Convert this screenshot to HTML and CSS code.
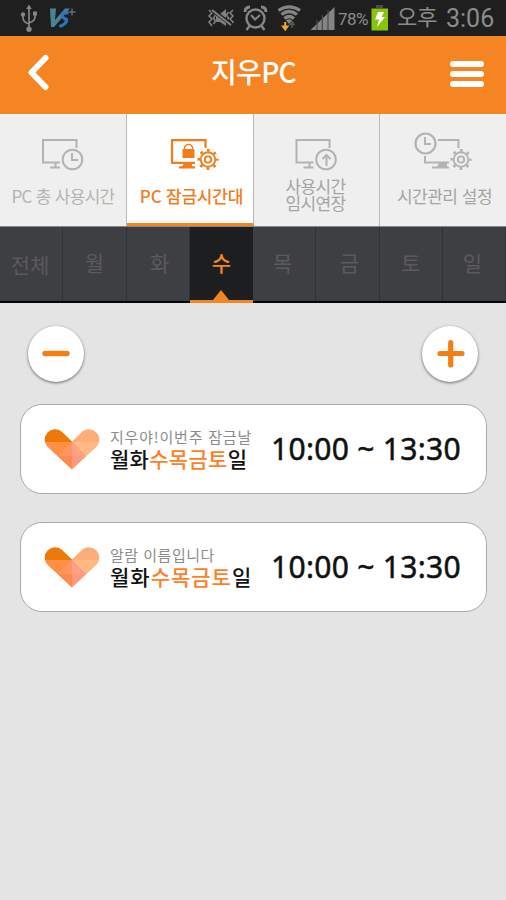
FILE: index.html
```
<!DOCTYPE html>
<html lang="ko">
<head>
    <meta charset="UTF-8">
    <meta name="viewport" content="width=device-width, initial-scale=1.0">
    <title>지우PC</title>
    <link rel="stylesheet" href="styles.css">
</head>
<body>
    <!-- shared shapes -->
    <svg class="defs" width="0" height="0">
        <symbol id="gear" viewBox="-12 -12 24 24">
            <circle r="7.6" fill="none" stroke="currentColor" stroke-width="1.9"/>
            <circle r="3.3" fill="none" stroke="currentColor" stroke-width="2"/>
            <circle r="9.6" fill="none" stroke="currentColor" stroke-width="2.8" stroke-dasharray="2.8 4.74" stroke-dashoffset="1.4"/>
        </symbol>
        <symbol id="heart" viewBox="0 0 56 42">
            <clipPath id="heartClip">
                <path d="M28 41.5L3.2 18.5A10.4 10.4 0 0 1 17.6 3.6L28 13.5L38.4 3.6A10.4 10.4 0 0 1 52.8 18.5Z"/>
            </clipPath>
            <g clip-path="url(#heartClip)">
                <rect width="28" height="14" fill="#ec7a08"/>
                <rect x="28" width="28" height="14" fill="#fdae78"/>
                <rect y="14" width="28" height="28" fill="#ff8f45"/>
                <rect x="28" y="14" width="28" height="28" fill="#ffb985"/>
                <path d="M28 14L14 28L28 42Z" fill="#ff8a4e"/>
                <path d="M28 14L42 28L28 42Z" fill="#ff9a80"/>
                <path d="M28 14L14 28H28Z" fill="#ff9662"/>
                <path d="M28 14L42 28H28Z" fill="#fda184"/>
            </g>
        </symbol>
    </svg>

    <div class="statusbar">
        <svg class="status-left" width="80" height="36" viewBox="0 0 80 36">
            <g fill="none" stroke="#858585" stroke-width="1.7">
                <path d="M29 8V29M23 15V18Q23 22 29 24M35 14V17Q35 21 29 23"/>
            </g>
            <g fill="#858585">
                <path d="M29 4.5L31.8 9H26.2Z"/>
                <circle cx="23" cy="14.5" r="2.2"/>
                <rect x="33" y="11.5" width="4" height="4"/>
                <circle cx="29" cy="29.3" r="2.7"/>
            </g>
            <path d="M50 8.5H56L55 20L65 8.5H70L54 27H51Z" fill="#4c8394"/>
            <path d="M68.5 13H63.5Q60 17 66.5 19.5Q67 24 59.5 26.5" fill="none" stroke="#2d74bd" stroke-width="3.2"/>
            <path d="M72 8.5V15.5M68.5 12H75.5" stroke="#55727e" stroke-width="1.4"/>
        </svg>
        <div class="status-right">
            <svg width="130" height="36" viewBox="206 0 130 36">
                <g fill="none" stroke="#808080" stroke-width="1.6">
                    <path d="M209 10L212 13L209 16L212 19L209 22L212 26M213.5 12L215.5 15L213.5 18L215.5 21L213.5 24M233 10L230 13L233 16L230 19L233 22L230 26M228.5 12L226.5 15L228.5 18L226.5 21L228.5 24"/>
                </g>
                <path d="M216 14H220L226 9V26L220 22H216Z" fill="#808080"/>
                <path d="M212 10L232 25" stroke="#1f1f1f" stroke-width="4"/>
                <path d="M212 10L231 25" stroke="#808080" stroke-width="2"/>
                <g fill="none" stroke="#868686">
                    <circle cx="255.5" cy="18.5" r="9" stroke-width="2.4"/>
                    <path d="M251 15L255 19.5L260 15" stroke-width="2"/>
                    <path d="M249.5 26L246.5 30M261.5 26L264.5 30" stroke-width="2.4"/>
                    <path d="M245 12Q245 7 250 7M266 12Q266 7 261 7" stroke-width="3"/>
                </g>
                <g fill="none" stroke="#858585" stroke-width="3.2">
                    <path d="M278.5 10.5Q289 3.5 300 10.5M281.5 14.5Q289 8.5 297 14.5M284.5 18.5Q289 14.5 294 18.5"/>
                </g>
                <path d="M286 20.5Q289 18 292 20.5L289 24Z" fill="#858585"/>
                <path d="M285.2 22V28M283 26.5L285.2 29.5L287.4 26.5Z" stroke="#f4a32c" stroke-width="2" fill="#f4a32c"/>
                <path d="M292 28V23M290 24.5L292 21.5L294 24.5Z" stroke="#555" stroke-width="1.6" fill="#555"/>
                <path d="M310.5 30L334.5 7V30Z" fill="#848484"/>
                <path d="M317 20V30M322.3 15V30M328 10V30" stroke="#4a4a4a" stroke-width="1.2"/>
            </svg>
            <span class="battery-text">78%</span>
            <svg class="battery" width="18" height="26" viewBox="0 0 18 26">
                <rect x="5" y="0" width="7" height="3" fill="#4b4b4b"/>
                <rect x="0.5" y="3.5" width="16.5" height="22" fill="#87c40c"/>
                <path d="M7 7H13L10.5 12H14L6 22L8 14.5H4Z" fill="#fff"/>
            </svg>
            <span class="ampm">오후</span>
            <span class="clock">3:06</span>
        </div>
    </div>

    <header class="header">
        <svg width="24" height="38" viewBox="0 0 24 38">
            <path d="M18.5 4L4.5 18.5L18.5 33" fill="none" stroke="#fff" stroke-width="6" stroke-linecap="round" stroke-linejoin="round"/>
        </svg>
        <h1>지우PC</h1>
        <div class="menu"><i></i><i></i><i></i></div>
    </header>

    <nav class="tabs">
        <div class="tab">
            <svg width="126" height="62" viewBox="0 0 126 62">
                <g fill="none" stroke="currentColor" stroke-width="2">
                    <path d="M76.5 34V26H43V48.5H60M55.5 49V53M50 53.5H60"/>
                    <circle cx="72.5" cy="45.5" r="9.8"/>
                    <path d="M72 39V46H78"/>
                </g>
            </svg>
            <span class="label first">PC 총 사용시간</span>
        </div>
        <div class="tab active">
            <svg width="126" height="62" viewBox="127 0 126 62">
                <path d="M205.5 34V26.2H172V48.8H195M179 53.3H195" fill="none" stroke="currentColor" stroke-width="2.2"/>
                <path d="M184 49H192V53H182Z" fill="currentColor"/>
                <rect x="182.5" y="35" width="12" height="9" fill="currentColor"/>
                <path d="M184.5 35V33Q188.5 27.5 192.5 33V35" fill="none" stroke="currentColor" stroke-width="1.3"/>
                <use href="#gear" x="196.5" y="34" width="23" height="23"/>
            </svg>
            <span class="label">PC 잠금시간대</span>
        </div>
        <div class="tab">
            <svg width="126" height="62" viewBox="253.5 0 126 62">
                <g fill="none" stroke="currentColor" stroke-width="2">
                    <path d="M329 34V26H296V48.5H313M309 49V53M303 53.5H313"/>
                    <circle cx="325.5" cy="45.5" r="9.8"/>
                    <path d="M326 52V42M322 45L326 41L330 45"/>
                </g>
            </svg>
            <span class="label two">사용시간<br>임시연장</span>
        </div>
        <div class="tab">
            <svg width="126" height="62" viewBox="380 0 126 62">
                <g fill="none" stroke="currentColor" stroke-width="2">
                    <circle cx="425.5" cy="29.5" r="10" stroke-width="2.2"/>
                    <path d="M425 23V30H431M438 26H458.5V34M425 42V48.5H449M432 53.5H449"/>
                </g>
                <path d="M439 49H447V53H437Z" fill="currentColor"/>
                <use href="#gear" x="449.5" y="34" width="23" height="23"/>
            </svg>
            <span class="label last">시간관리 설정</span>
        </div>
    </nav>

    <div class="days">
        <div class="day all">전체</div>
        <div class="day">월</div>
        <div class="day right">화</div>
        <div class="day active">수</div>
        <div class="day left">목</div>
        <div class="day right">금</div>
        <div class="day">토</div>
        <div class="day left">일</div>
    </div>

    <main>
        <div class="buttons">
            <div class="round">
                <svg width="56" height="56" viewBox="0 0 56 56"><path d="M17 27.5H39" stroke="#f57f17" stroke-width="5.4" stroke-linecap="round"/></svg>
            </div>
            <div class="round">
                <svg width="56" height="56" viewBox="0 0 56 56"><path d="M18 27.5H40M28.7 16.5V39" stroke="#f57f17" stroke-width="5.2" stroke-linecap="round"/></svg>
            </div>
        </div>

        <div class="alarm">
            <svg class="heart" width="56" height="42"><use href="#heart"/></svg>
            <div class="info">
                <p class="name long">지우야!이번주 잠금날</p>
                <p class="week">월화<b>수목금토</b>일</p>
            </div>
            <div class="time">10:00 ~ 13:30</div>
        </div>

        <div class="alarm">
            <svg class="heart" width="56" height="42"><use href="#heart"/></svg>
            <div class="info">
                <p class="name">알람 이름입니다</p>
                <p class="week wide">월화<b>수목금토</b>일</p>
            </div>
            <div class="time">10:00 ~ 13:30</div>
        </div>
    </main>
</body>
</html>
```
FILE: styles.css
```
* {
    box-sizing: border-box;
}

body {
    margin: 0;
    height: 900px;
    overflow: hidden;
    background-color: #e4e4e4;
    font-family: "Noto Sans", "Noto Sans CJK KR", sans-serif;
    white-space: nowrap;
}

svg {
    display: block;
    flex: none;
}

.defs {
    position: absolute;
}

/* Status bar */
.statusbar {
    display: flex;
    justify-content: space-between;
    height: 36px;
    background-color: #1f1f1f;
    color: #8c8c8c;
}

.status-right {
    display: flex;
    width: 300px;
    line-height: 36px;
}

.battery-text {
    width: 35px;
    padding-left: 2px;
    font-family: Roboto, sans-serif;
    font-size: 17px;
    letter-spacing: -0.6px;
    line-height: 38px;
}

.battery {
    margin-top: 5px;
}

.ampm {
    width: 51px;
    padding-left: 8px;
    font-family: "Noto Sans CJK KR", sans-serif;
    font-size: 22px;
    line-height: 31px;
}

.clock {
    padding-left: 6px;
    font-family: Roboto, sans-serif;
    font-size: 25px;
    line-height: 38px;
}

/* Header */
.header {
    display: flex;
    justify-content: space-between;
    align-items: center;
    height: 78px;
    padding: 0 22px 4px 27px;
    background-color: #f58422;
    color: #fff;
}

.header h1 {
    margin: 0;
    padding: 0 0 4px 6px;
    font-size: 28px;
    font-weight: 500;
    font-family: "Noto Sans CJK KR", sans-serif;
    letter-spacing: -0.7px;
}

.menu {
    display: flex;
    flex-direction: column;
    gap: 4px;
    width: 34px;
    padding-top: 1px;
}

.menu i {
    height: 6px;
    border-radius: 3px;
    background-color: #fff;
}

/* Tabs */
.tabs {
    display: flex;
    height: 113px;
    border-bottom: 1px solid #888;
}

.tab {
    width: 127px;
    border-right: 1px solid #b9b9b9;
    background-color: #efefef;
    color: #b5b3b1;
}

.tab:nth-child(3) {
    width: 126px;
}

.tab:last-child {
    width: 126px;
    border-right: none;
}

.tab.active {
    border-bottom: 3px solid #f58422;
    background-color: #fff;
    color: #f07c1a;
}

.label {
    display: block;
    padding-top: 11px;
    text-align: center;
    font-family: "Noto Sans CJK KR", sans-serif;
    font-size: 17px;
    line-height: 17px;
    letter-spacing: -0.7px;
}

.tab.active .label {
    padding-left: 3px;
    font-weight: 500;
    letter-spacing: -0.2px;
}

.label.two {
    padding-top: 1px;
    padding-right: 2px;
    color: #a5a3a1;
}

.label.last {
    padding-left: 3px;
    letter-spacing: -0.5px;
    color: #a5a3a1;
}

/* Days of the week */
.days {
    display: flex;
    height: 76px;
    border-bottom: 2px solid #050505;
    background-color: #3e3f43;
}

.day {
    width: 63.25px;
    border-right: 1px solid #303236;
    text-align: center;
    font-family: "Noto Sans CJK KR", sans-serif;
    font-size: 21px;
    line-height: 70px;
    color: #5b5b5d;
}

.day.all {
    padding-right: 2px;
    line-height: 74px;
}

.day.right {
    padding-left: 4px;
}

.day.left {
    padding-right: 3px;
}

.day.active {
    position: relative;
    height: 76px;
    border-right: none;
    border-bottom: 3px solid #f58422;
    background-color: #1c1e1f;
    font-weight: 500;
    color: #f58422;
}

.day.active::after {
    content: "";
    position: absolute;
    left: 50%;
    bottom: 0;
    margin-left: -8px;
    border: 8px solid transparent;
    border-top: none;
    border-bottom: 10px solid #f58422;
}

/* Content */
main {
    padding: 23px 19px 0 20px;
}

.buttons {
    display: flex;
    justify-content: space-between;
    padding: 0 9px 0 8px;
    margin-bottom: 22px;
}

.round {
    width: 56px;
    height: 56px;
    border-radius: 50%;
    background-color: #fff;
    box-shadow: 0 1px 3px rgba(0, 0, 0, 0.55);
}

.alarm {
    display: flex;
    height: 90px;
    margin-bottom: 28px;
    padding-left: 23px;
    border: 1px solid #aaa;
    border-radius: 22px;
    background-color: #fff;
}

.heart {
    margin-top: 23px;
}

.info {
    width: 162px;
    padding: 23px 0 0 10px;
}

.info p {
    margin: 0;
    font-family: "Noto Sans CJK KR", sans-serif;
}

.name {
    font-size: 15px;
    line-height: 18px;
    letter-spacing: 0.5px;
    color: #8b8b8b;
}

.name.long {
    letter-spacing: 0.8px;
}

.week {
    font-size: 21px;
    font-weight: 500;
    line-height: 25px;
    letter-spacing: 0.3px;
    color: #111;
}

.week b {
    font-weight: 500;
    color: #ff7f27;
}

.week.wide {
    letter-spacing: 1px;
}

.time {
    padding-left: 9px;
    font-size: 30px;
    line-height: 88px;
    letter-spacing: 0.3px;
    color: #111;
    -webkit-text-stroke: 0.5px #111;
}
```
